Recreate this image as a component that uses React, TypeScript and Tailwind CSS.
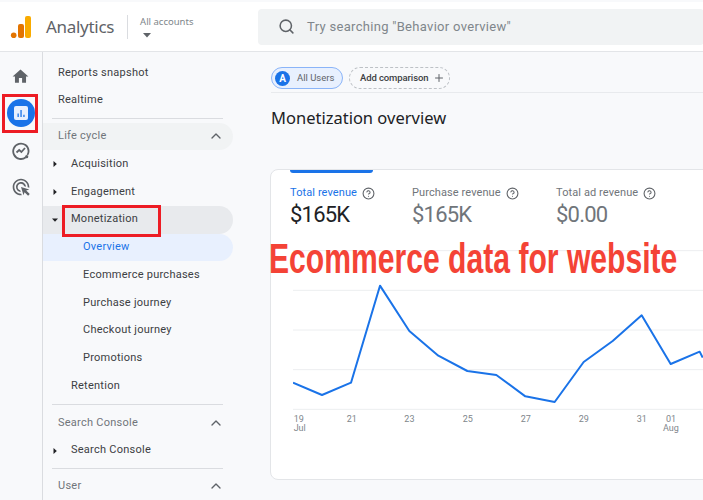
import { ChevronUp, Plus, Search, CircleHelp } from "lucide-react";
import { MdHome, MdOutlineAdsClick } from "react-icons/md";

const CHART_POINTS =
  "0,458 87,495 174,458 261,167 349,303 436,377 523,423 610,435 697,499 785,516 872,396 959,333 1046,256 1133,402 1220,365 1229,383";

const AXIS_LABELS = [
  { x: 2, day: "19", month: "Jul" },
  { x: 161, day: "21" },
  { x: 334, day: "23" },
  { x: 509, day: "25" },
  { x: 683, day: "27" },
  { x: 857, day: "29" },
  { x: 1031, day: "31" },
  { x: 1119, day: "01", month: "Aug" },
];

const METRICS = [
  { label: "Total revenue", value: "$165K", width: "w-[122px]", labelColor: "text-[#1a73e8]", valueColor: "text-[#202124]" },
  { label: "Purchase revenue", value: "$165K", width: "w-[144px]", labelColor: "text-[#70757a]", valueColor: "text-[#70757a]" },
  { label: "Total ad revenue", value: "$0.00", width: "w-[130px]", labelColor: "text-[#70757a]", valueColor: "text-[#70757a]" },
];

function Caret({ open }: { open?: boolean }) {
  return (
    <svg width="6" height="6" viewBox="0 0 6 6" className="absolute left-[9px] top-[11px] text-[#202124]" fill="currentColor">
      {open ? <path d="M0 1.5h6L3 4.8z" /> : <path d="M1.5 0v6L4.8 3z" />}
    </svg>
  );
}

function SectionRow({ label, pill }: { label: string; pill?: boolean }) {
  return (
    <div className={`h-[27.75px] flex items-center justify-between pl-[15px] pr-[9px] rounded-r-full text-[#70757a] ${pill ? "bg-[#f1f3f4]" : ""}`}>
      <span>{label}</span>
      <ChevronUp className="w-4 h-4 text-[#5f6368]" strokeWidth={2} />
    </div>
  );
}

function NavRow({ label, indent, caret, className }: { label: string; indent: string; caret?: "open" | "closed"; className?: string }) {
  return (
    <div className={`relative h-[27.75px] flex items-center rounded-r-full ${indent} ${className ?? "text-[#3c4043]"}`}>
      {caret && <Caret open={caret === "open"} />}
      <span>{label}</span>
    </div>
  );
}

export default function App() {
  return (
    <div className="relative w-[703px] h-[500px] overflow-hidden flex flex-col bg-[#f8f9fb] font-['Roboto',sans-serif]">
      {/* Top bar */}
      <header className="h-[50px] mt-[2px] shrink-0 bg-white border-b border-[#e3e5e8] flex items-center">
        <svg width="22" height="24" viewBox="0 0 22 24" className="ml-[10px] shrink-0">
          <rect x="15" y="1" width="6" height="22" rx="2" fill="#f9ab00" />
          <rect x="8" y="9" width="6" height="14" rx="2" fill="#e37400" />
          <circle cx="3.7" cy="20.2" r="2.8" fill="#e37400" />
        </svg>
        <span className="ml-[14px] text-[17px] tracking-[-0.3px] text-[#5f6368] font-['Noto_Sans',sans-serif]">Analytics</span>
        <div className="ml-[13px] w-px h-[24px] bg-[#dadce0] shrink-0" />
        <div className="ml-[12px] w-[56px] shrink-0 flex flex-col text-[9.5px] leading-[12px] text-[#80868b] whitespace-nowrap font-['Noto_Sans',sans-serif]">
          <span>All accounts</span>
          <svg width="8" height="5" viewBox="0 0 8 5" className="ml-[3px] mt-[5px] text-[#5f6368]" fill="currentColor">
            <path d="M0 0h8L4 4.5z" />
          </svg>
        </div>
        <div className="ml-[62px] w-[446px] shrink-0 h-[36px] rounded-[4px] bg-[#f1f3f4] flex items-center pl-[20px] text-[13px] text-[#80868b] tracking-[0.3px]">
          <Search className="w-[17px] h-[17px] text-[#5f6368]" strokeWidth={2.2} />
          <span className="ml-[12px] whitespace-nowrap">Try searching "Behavior overview"</span>
        </div>
      </header>

      <div className="flex-1 flex min-h-0">
        {/* Icon rail */}
        <aside className="w-[43px] shrink-0 border-r border-[#dadce0] bg-[#f8f9fb] flex flex-col items-center pr-px">
          <MdHome className="mt-[15px] w-[19px] h-[19px] text-[#5f6368]" />
          <div className="mt-[13px] w-[28px] h-[28px] rounded-full bg-[#1a73e8] flex items-center justify-center">
            <svg width="14" height="14" viewBox="0 0 14 14">
              <rect width="14" height="14" rx="2" fill="#e8f0fe" />
              <path d="M3.5 7.5h1.3v3.5H3.5zM6.4 4h1.3v7H6.4zM9.3 8.8h1.3V11H9.3z" fill="#1a73e8" />
            </svg>
          </div>
          <svg width="18" height="18" viewBox="0 0 18 18" fill="none" stroke="#5f6368" className="mt-[15px]">
            <path d="M13.8 15.2A7.7 7.7 0 1 1 16.6 9c0 1.5-.4 2.9-1.2 4.1" strokeWidth="1.8" />
            <path d="M4.5 10.5 7.2 8l2.2 2 3.6-4" strokeWidth="1.8" />
            <circle cx="14.7" cy="14.7" r="1.6" fill="#5f6368" stroke="none" />
          </svg>
          <MdOutlineAdsClick className="mt-[17px] w-[20px] h-[20px] text-[#5f6368]" />
        </aside>

        {/* Report nav */}
        <nav className="w-[190px] shrink-0 pt-[7px] text-[11px] font-[450] tracking-[0.25px] whitespace-nowrap">
          <NavRow label="Reports snapshot" indent="pl-[15px]" />
          <NavRow label="Realtime" indent="pl-[15px]" />
          <div className="mt-[3px] mb-[4px] ml-[9px] w-[171px] border-t border-[#dadce0]" />
          <SectionRow label="Life cycle" pill />
          <NavRow label="Acquisition" indent="pl-[28px]" caret="closed" />
          <NavRow label="Engagement" indent="pl-[28px]" caret="closed" />
          <NavRow label="Monetization" indent="pl-[28px]" caret="open" className="bg-[#e8eaed] text-[#3c4043]" />
          <NavRow label="Overview" indent="pl-[40px]" className="bg-[#e8f0fe] text-[#1a73e8]" />
          <NavRow label="Ecommerce purchases" indent="pl-[40px]" />
          <NavRow label="Purchase journey" indent="pl-[40px]" />
          <NavRow label="Checkout journey" indent="pl-[40px]" />
          <NavRow label="Promotions" indent="pl-[40px]" />
          <NavRow label="Retention" indent="pl-[28px]" />
          <div className="mt-[4px] mb-[4px] ml-[9px] w-[171px] border-t border-[#dadce0]" />
          <SectionRow label="Search Console" />
          <NavRow label="Search Console" indent="pl-[28px]" caret="closed" />
          <div className="mt-[3px] mb-[4px] ml-[9px] w-[171px] border-t border-[#dadce0]" />
          <SectionRow label="User" />
        </nav>

        {/* Main content */}
        <main className="flex-1 min-w-0 pl-[38px] pt-[15px]">
          <div className="w-[500px] h-[26px] flex items-start gap-[6px] border-b border-[#e8eaed]">
            <div className="h-[22px] w-[72px] rounded-full border border-[#8ab4f8] bg-[#e8f0fe] flex items-center pl-[3px] text-[9.5px] text-[#5f6368]">
              <span className="w-[15px] h-[15px] rounded-full bg-[#1a73e8] text-white font-bold text-[10px] flex items-center justify-center">A</span>
              <span className="ml-[7px]">All Users</span>
            </div>
            <div className="h-[22px] w-[101px] rounded-full border border-dashed border-[#bdc1c6] flex items-center pl-[10px] text-[9.5px] tracking-[-0.1px] font-medium text-[#3c4043] whitespace-nowrap">
              Add comparison
              <Plus className="ml-[5px] w-[12px] h-[12px] text-[#5f6368]" />
            </div>
          </div>
          <h1 className="mt-[13px] text-[16.5px] leading-[24px] text-[#202124] font-['Noto_Sans',sans-serif]">Monetization overview</h1>

          {/* Card */}
          <section className="mt-[39px] -ml-px w-[520px] h-[311px] rounded-[8px] border border-[#e3e5e8] bg-white pl-[19px]">
            <div className="w-[83px] h-[3px] rounded-b-[3px] bg-[#1a73e8]" />
            <div className="mt-[13px] flex">
              {METRICS.map((metric) => (
                <div key={metric.label} className={`${metric.width} shrink-0`}>
                  <div className={`flex items-center gap-[5px] text-[11px] leading-[14px] tracking-[0.1px] whitespace-nowrap ${metric.labelColor}`}>
                    {metric.label}
                    <CircleHelp className="w-[13px] h-[13px] text-[#5f6368]" />
                  </div>
                  <div className={`mt-[2px] text-[22px] leading-[26px] tracking-[-0.8px] ${metric.valueColor}`}>{metric.value}</div>
                </div>
              ))}
            </div>
            <svg width="410" height="210" viewBox="0 0 1230 630" className="mt-[2px] ml-[3px] block" fill="none">
              {[62, 181, 300, 419, 538].map((y) => (
                <line key={y} x1="0" x2="1230" y1={y} y2={y} stroke="#eceef0" strokeWidth="3" />
              ))}
              <polyline points={CHART_POINTS} stroke="#1a73e8" strokeWidth="6" strokeLinejoin="round" />
              {AXIS_LABELS.map((label) => (
                <text key={label.day} x={label.x} y="575" fontSize="27" fill="#80868b" stroke="none" fontFamily="Roboto, sans-serif">
                  <tspan>{label.day}</tspan>
                  {label.month && (
                    <tspan x={label.x - (label.month === "Aug" ? 9 : 0)} dy="28">
                      {label.month}
                    </tspan>
                  )}
                </text>
              ))}
            </svg>
          </section>
        </main>
      </div>

      {/* Annotations over the screenshot */}
      <div className="absolute left-[2px] top-[94px] w-[36px] h-[39px] border-[3px] border-[#ed1c24]" />
      <div className="absolute left-[62px] top-[205px] w-[99px] h-[32px] border-[3px] border-[#ed1c24]" />
      <div className="absolute left-[269px] top-[233px] origin-left scale-x-[0.717] text-[42px] leading-[52px] font-bold text-[#f44336] whitespace-nowrap font-['Liberation_Sans',sans-serif]">
        Ecommerce data for website
      </div>
    </div>
  );
}
